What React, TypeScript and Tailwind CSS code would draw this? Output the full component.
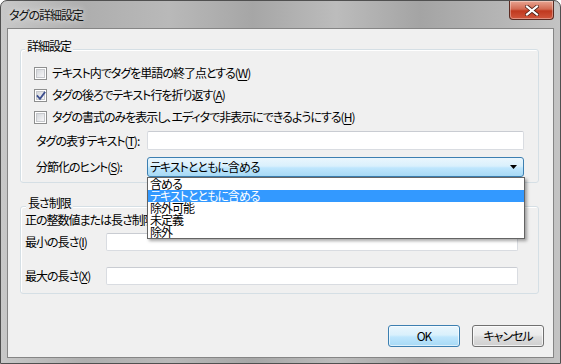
import React from "react";

function CheckBox({ checked }: { checked?: boolean }) {
  return (
    <span className="relative w-[13px] h-[13px] shrink-0 border border-[#8e8f8f] bg-white p-[1px] flex">
      <span className="flex-1 border border-[#c6c8cc] bg-[linear-gradient(135deg,#d4d7db,#f7f7f8)]" />
      {checked && (
        <svg className="absolute left-[1px] top-[1px]" width="10" height="10" viewBox="0 0 10 10">
          <path d="M1.5 5 L4 7.8 L8.6 1.6" fill="none" stroke="#3d4f8e" strokeWidth="1.8" strokeLinecap="square" />
        </svg>
      )}
    </span>
  );
}

function Row({ checked, text, u, rest }: { checked?: boolean; text: string; u: string; rest?: string }) {
  return (
    <div className="h-[22px] flex items-center gap-[5px]">
      <CheckBox checked={checked} />
      <span className="leading-[16px] whitespace-nowrap">
        {text}(<span className="underline underline-offset-2">{u}</span>){rest}
      </span>
    </div>
  );
}

function TextBox({ w, h }: { w: string; h: string }) {
  return <div className={`${w} ${h} shrink-0 bg-white border border-[#d9dce1] border-t-[#c9ccd2] rounded-[2px]`} />;
}

export default function App() {
  const items = ["含める", "テキストとともに含める", "除外可能", "未定義", "除外"];
  return (
    <div className="w-[561px] h-[364px] flex flex-col overflow-hidden rounded-t-[7px] border border-[#505050] bg-[linear-gradient(90deg,#c8c8c8_0%,#aeaeae_15%,#b9b9b9_30%,#a6a6a6_45%,#bcbcbc_60%,#a4a4a4_75%,#b6b6b6_90%,#c4c4c4_100%)] text-[12px] tracking-[-1px] text-black font-['Noto_Sans_CJK_JP',sans-serif] [font-feature-settings:'palt']">
      <div className="h-[27px] shrink-0 flex justify-between">
        <span className="pl-[8px] pt-[6px] leading-[16px] text-[#111] [text-shadow:0_0_6px_rgba(255,255,255,0.9)]">タグの詳細設定</span>
        <div className="mr-[6px] w-[45px] h-[19px] rounded-b-[4px] border border-t-0 border-[#5b2b22] bg-[linear-gradient(180deg,#e8a491_0%,#d26a52_45%,#c0391f_55%,#d0563c_100%)] flex items-center justify-center shadow-[inset_0_0_0_1px_rgba(255,255,255,0.35)]">
          <svg width="14" height="11" viewBox="0 0 14 11">
            <path d="M2 1.5 L12 9.5 M12 1.5 L2 9.5" stroke="#4a1d14" strokeWidth="3.6" strokeLinecap="square" />
            <path d="M2 1.5 L12 9.5 M12 1.5 L2 9.5" stroke="#ffffff" strokeWidth="2.2" strokeLinecap="square" />
          </svg>
        </div>
      </div>
      <div className="mx-[6px] h-[330px] shrink-0 border border-[#858585] bg-[#f0f0f0] flex flex-col">
        {/* group 1 */}
        <div className="ml-[12px] mt-[20px] w-[519px] border border-[#d5dfe5] rounded-[3px] shadow-[inset_1px_1px_0_#ffffff] flex flex-col pb-[5px]">
          <span className="-mt-[12px] ml-[4px] px-[2px] bg-[#f0f0f0] w-fit leading-[16px]">詳細設定</span>
          <div className="mt-[8px] pl-[13px] flex flex-col">
            <Row text="テキスト内でタグを単語の終了点とする" u="W" />
            <Row checked text="タグの後ろでテキスト行を折り返す" u="A" />
            <Row text="タグの書式のみを表示し、エディタで非表示にできるようにする" u="H" />
          </div>
          <div className="mt-[3px] pl-[15px] flex items-center">
            <span className="w-[111px] shrink-0 leading-[16px] whitespace-nowrap">
              タグの表すテキスト(<span className="underline underline-offset-2">T</span>):
            </span>
            <TextBox w="w-[377px]" h="h-[19px]" />
          </div>
          <div className="mt-[7px] pl-[15px] flex items-center">
            <span className="w-[111px] shrink-0 leading-[16px] whitespace-nowrap">
              分節化のヒント(<span className="underline underline-offset-2">S</span>):
            </span>
            <div className="relative w-[377px] h-[20px] shrink-0">
              <div className="w-full h-full border border-[#3c7fb1] rounded-[3px] bg-[linear-gradient(180deg,#eaf6fd_0%,#d9f0fc_45%,#bee6fd_55%,#a7d9f5_100%)] flex items-center justify-between pl-[2px] pr-[6px]">
                <span className="leading-[16px]">テキストとともに含める</span>
                <svg width="7" height="4" viewBox="0 0 7 4">
                  <path d="M0 0 H7 L3.5 4 Z" fill="#000" />
                </svg>
              </div>
              <div className="absolute left-0 top-full w-[378px] border border-[#646464] bg-white shadow-[2px_2px_3px_rgba(0,0,0,0.35)] z-10 flex flex-col">
                {items.map((t, i) => (
                  <div
                    key={t}
                    className={`h-[12px] leading-[12px] pl-[2px] whitespace-nowrap ${i === 1 ? "bg-[#3399ff] text-white" : "text-black"}`}
                  >
                    {t}
                  </div>
                ))}
              </div>
            </div>
          </div>
        </div>
        {/* group 2 */}
        <div className="ml-[12px] mt-[23px] w-[519px] border border-[#d5dfe5] rounded-[3px] shadow-[inset_1px_1px_0_#ffffff] flex flex-col pb-[8px]">
          <span className="-mt-[12px] ml-[5px] px-[2px] bg-[#f0f0f0] w-fit leading-[16px]">長さ制限</span>
          <span className="mt-[1px] ml-[4px] leading-[16px] whitespace-nowrap">正の整数値または長さ制限なしの場合は空欄</span>
          <div className="mt-[5px] pl-[4px] flex items-center">
            <span className="w-[81px] shrink-0 leading-[16px] whitespace-nowrap">
              最小の長さ(<span className="underline underline-offset-2">I</span>)
            </span>
            <TextBox w="w-[412px]" h="h-[18px]" />
          </div>
          <div className="mt-[16px] pl-[4px] flex items-center">
            <span className="w-[81px] shrink-0 leading-[16px] whitespace-nowrap">
              最大の長さ(<span className="underline underline-offset-2">X</span>)
            </span>
            <TextBox w="w-[412px]" h="h-[18px]" />
          </div>
        </div>
        {/* buttons */}
        <div className="mt-[31px] pr-[9px] flex justify-end gap-[12px]">
          <button className="w-[72px] h-[22px] rounded-[3px] border border-[#3c7fb1] bg-[linear-gradient(180deg,#eaf6fd_0%,#d9f0fc_45%,#bee6fd_55%,#a7d9f5_100%)] shadow-[inset_0_0_0_1px_rgba(255,255,255,0.6)] flex items-center justify-center leading-[16px]">
            OK
          </button>
          <button className="w-[72px] h-[22px] rounded-[3px] border border-[#707070] bg-[linear-gradient(180deg,#f2f2f2_0%,#ebebeb_45%,#dddddd_55%,#cfcfcf_100%)] shadow-[inset_0_0_0_1px_rgba(255,255,255,0.7)] flex items-center justify-center leading-[16px]">
            キャンセル
          </button>
        </div>
      </div>
    </div>
  );
}
